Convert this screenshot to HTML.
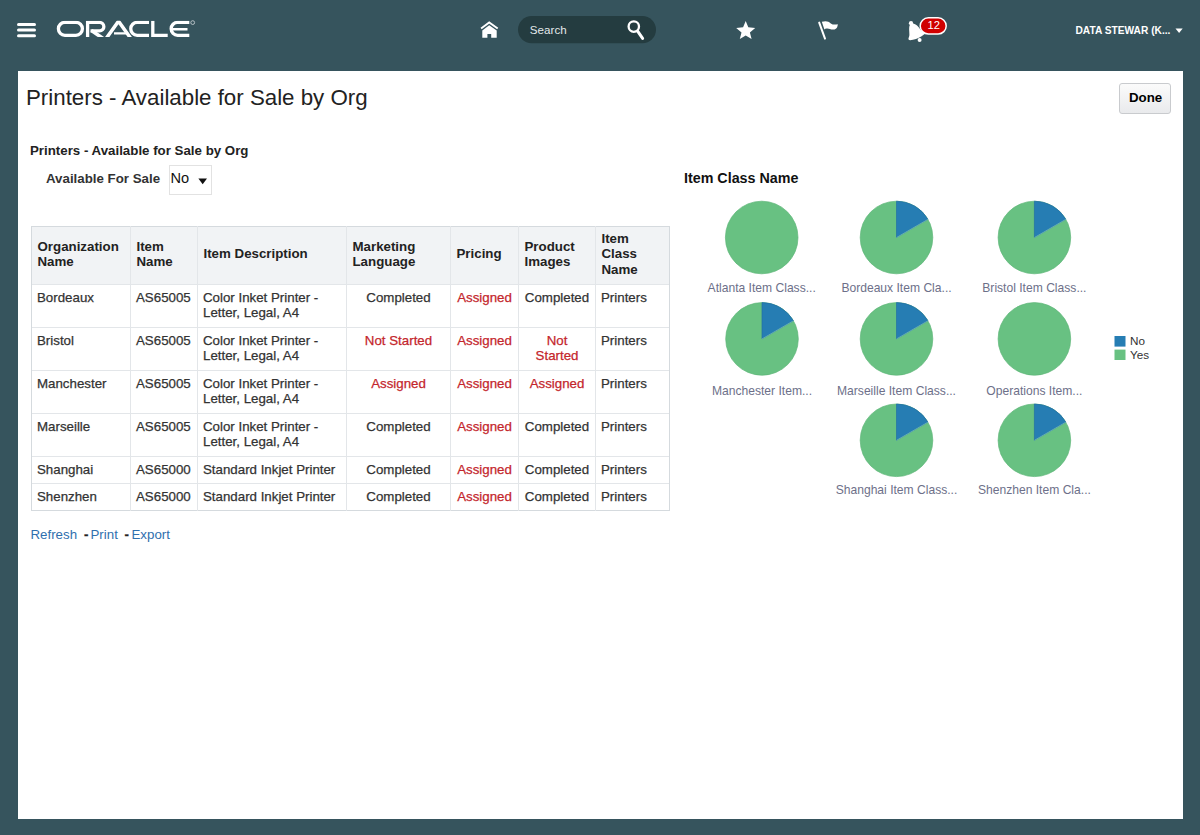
<!DOCTYPE html>
<html><head><meta charset="utf-8">
<style>
*{margin:0;padding:0;box-sizing:border-box}
html,body{width:1200px;height:835px;overflow:hidden;background:#36545d;font-family:"Liberation Sans",sans-serif}
.abs{position:absolute}
#panel{position:absolute;left:18px;top:71px;width:1165px;height:748px;background:#fff}
.t{position:absolute;white-space:nowrap;line-height:1}
.b{font-weight:bold}
.c{color:#333;font-size:13.3px;-webkit-text-stroke:0.25px currentColor}
.h{color:#222;font-size:13.3px;font-weight:bold}
.r{color:#c4262c}
.lab{color:#6d7089;font-size:12.1px}
.lnk{color:#2f6fae;font-size:13.3px}
</style></head><body>

<svg class="abs" style="left:0;top:0" width="1200" height="60">
 <g fill="#fff">
  <rect x="17" y="23" width="19" height="3" rx="1.5"/>
  <rect x="17" y="28.6" width="19" height="3" rx="1.5"/>
  <rect x="17" y="34.2" width="19" height="3" rx="1.5"/>
 </g>
 <defs><clipPath id="lc"><rect x="50" y="20.75" width="150" height="16.3"/></clipPath></defs>
 <g fill="none" stroke="#fff" stroke-width="3.3" clip-path="url(#lc)">
  <rect x="58.4" y="22.4" width="24" height="12.9" rx="6.45"/>
  <path d="M87.6 37 V22.4 H99.6 A4.25 4.25 0 0 1 99.6 30.9 H90.5"/>
  <path d="M91.5 30.5 L104.5 39.5" stroke-width="3.6"/>
  <path d="M105.8 39 L118.5 21.2 L131.2 39" stroke-width="3.5" stroke-linejoin="miter"/>
  <path d="M114 33.3 H127"  stroke-width="2.2"/>
  <path d="M149 22.4 H137.2 A6.45 6.45 0 0 0 137.2 35.3 H149"/>
  <path d="M152.8 20.8 V35.3 H167.7"/>
  <path d="M189.3 22.4 H177.6 A6.45 6.45 0 0 0 177.6 35.3 H189.3"/>
  <path d="M172.3 29.3 H187.5" stroke-width="2.6"/>
 </g>
 <circle cx="192.7" cy="22.6" r="1.9" fill="none" stroke="#cfd6d9" stroke-width="0.8"/>
 <!-- home -->
 <g fill="#fff">
  <path d="M482.3 30.4 L489.2 25.3 L496.7 30.4 V37.8 H491.2 V34 H487.4 V37.8 H482.3 Z"/>
 </g>
 <path d="M481.1 28.5 L489.2 22.5 L497.7 28.5" fill="none" stroke="#fff" stroke-width="1.9"/>
 <!-- search pill -->
 <rect x="518" y="16" width="138" height="27.3" rx="13.65" fill="#243c40"/>
 <circle cx="633.8" cy="26.6" r="5.2" fill="none" stroke="#fff" stroke-width="2.3"/>
 <path d="M637.6 31.2 L642.6 38.4" stroke="#fff" stroke-width="3" stroke-linecap="round"/>
 <!-- star -->
 <path d="M745.7 21 L748.3 27.3 L755.2 27.9 L749.9 32.4 L751.6 38.9 L745.7 35.4 L739.8 38.9 L741.5 32.4 L736.2 27.9 L743.1 27.3 Z" fill="#fff"/>
 <!-- flag -->
 <path d="M819.2 22.6 L825 38.6" stroke="#fff" stroke-width="2" stroke-linecap="round"/>
 <path d="M821.8 21.8 C826 20.5 828.5 21.3 830.8 23.4 C833 25 835.5 24.6 837.8 24.2 C837.6 27 836.5 29.4 833.6 29.6 C830.5 29.8 829 28.3 826.7 28.6 C825.6 28.7 824.9 29.1 824.4 29.4 Z" fill="#fff"/>
 <!-- bell -->
 <path d="M910 24.5 C908.5 27 909.4 31 909.4 35 C909.4 37 908 38 908.6 39.6 C909.2 40.6 911 40.2 913 39.8 C917 39 921 37 924 34.6 C925.2 33.6 925.2 32.6 924 32.2 C922 31.6 921 30.5 920 29 C918.5 26.5 916 24.5 913 23.6 Z" fill="#fff"/>
 <circle cx="911" cy="23.2" r="2.1" fill="#fff"/>
 <circle cx="919.6" cy="39.9" r="2" fill="#fff"/>
 <rect x="920.2" y="17.8" width="26" height="16.2" rx="8.1" fill="#d00000" stroke="#fff" stroke-width="1.5"/>
</svg>
<div class="t" style="left:529.7px;top:24.3px;font-size:11.6px;color:#e3e9eb;letter-spacing:0.05px">Search</div>
<div class="t" style="left:927.5px;top:19.8px;font-size:11.2px;color:#fff">12</div>
<div class="t b" style="left:1075.5px;top:25.5px;font-size:10.2px;color:#fff">DATA STEWAR (K...</div>
<svg class="abs" style="left:1174px;top:27px" width="10" height="7"><path d="M1.5 1.5 H8.7 L5.1 6 Z" fill="#fff"/></svg>
<div id="panel"></div>

<div class="t" style="left:26px;top:86.5px;font-size:22.3px;color:#222">Printers - Available for Sale by Org</div>
<div class="abs" style="left:1119px;top:83px;width:52px;height:30.5px;border:1px solid #c9cbce;border-radius:3px;background:linear-gradient(#fbfbfb,#e9eaec)"></div>
<div class="t b" style="left:1129px;top:90.8px;font-size:13.3px;color:#000">Done</div>
<div class="t h" style="left:30px;top:144px">Printers - Available for Sale by Org</div>
<div class="t h" style="left:46px;top:172px;color:#333">Available For Sale</div>
<div class="abs" style="left:169px;top:165px;width:42.5px;height:29.5px;border:1px solid #e2e2e2;background:#fff"></div>
<div class="t" style="left:170.5px;top:171px;font-size:14.6px;color:#111">No</div>
<svg class="abs" style="left:197px;top:177px" width="12" height="9"><path d="M1.4 1.4 H10 L5.7 7.2 Z" fill="#111"/></svg>
<div class="abs" style="left:31px;top:226px;width:639px;height:58px;background:#f1f3f5"></div>
<div class="abs" style="left:31px;top:226px;width:639px;height:1px;background:#d5dade"></div>
<div class="abs" style="left:31px;top:284px;width:639px;height:1px;background:#e3e6e9"></div>
<div class="abs" style="left:31px;top:327px;width:639px;height:1px;background:#e3e6e9"></div>
<div class="abs" style="left:31px;top:370px;width:639px;height:1px;background:#e3e6e9"></div>
<div class="abs" style="left:31px;top:413px;width:639px;height:1px;background:#e3e6e9"></div>
<div class="abs" style="left:31px;top:456px;width:639px;height:1px;background:#e3e6e9"></div>
<div class="abs" style="left:31px;top:483px;width:639px;height:1px;background:#e3e6e9"></div>
<div class="abs" style="left:31px;top:510px;width:639px;height:1px;background:#d5dade"></div>
<div class="abs" style="left:31px;top:226px;width:1px;height:285px;background:#d5dade"></div>
<div class="abs" style="left:130px;top:226px;width:1px;height:285px;background:#e3e6e9"></div>
<div class="abs" style="left:197px;top:226px;width:1px;height:285px;background:#e3e6e9"></div>
<div class="abs" style="left:346px;top:226px;width:1px;height:285px;background:#e3e6e9"></div>
<div class="abs" style="left:450px;top:226px;width:1px;height:285px;background:#e3e6e9"></div>
<div class="abs" style="left:518px;top:226px;width:1px;height:285px;background:#e3e6e9"></div>
<div class="abs" style="left:595px;top:226px;width:1px;height:285px;background:#e3e6e9"></div>
<div class="abs" style="left:669px;top:226px;width:1px;height:285px;background:#d5dade"></div>
<div class="abs h" style="left:37.5px;top:238.70px;line-height:15.5px;white-space:nowrap">Organization<br>Name</div>
<div class="abs h" style="left:136.5px;top:238.70px;line-height:15.5px;white-space:nowrap">Item<br>Name</div>
<div class="abs h" style="left:203.5px;top:246.45px;line-height:15.5px;white-space:nowrap">Item Description</div>
<div class="abs h" style="left:352.5px;top:238.70px;line-height:15.5px;white-space:nowrap">Marketing<br>Language</div>
<div class="abs h" style="left:456.5px;top:246.45px;line-height:15.5px;white-space:nowrap">Pricing</div>
<div class="abs h" style="left:524.5px;top:238.70px;line-height:15.5px;white-space:nowrap">Product<br>Images</div>
<div class="abs h" style="left:601.5px;top:230.95px;line-height:15.5px;white-space:nowrap">Item<br>Class<br>Name</div>
<div class="abs c" style="left:37px;top:289.5px;line-height:15.6px;white-space:nowrap">Bordeaux</div>
<div class="abs c" style="left:136px;top:289.5px;line-height:15.6px;white-space:nowrap">AS65005</div>
<div class="abs c" style="left:203px;top:289.5px;line-height:15.6px;white-space:nowrap">Color Inket Printer -<br>Letter, Legal, A4</div>
<div class="abs c" style="left:347px;top:289.5px;width:103px;text-align:center;line-height:15.6px">Completed</div>
<div class="abs c r" style="left:451px;top:289.5px;width:67px;text-align:center;line-height:15.6px">Assigned</div>
<div class="abs c" style="left:519px;top:289.5px;width:76px;text-align:center;line-height:15.6px">Completed</div>
<div class="abs c" style="left:601px;top:289.5px;line-height:15.6px;white-space:nowrap">Printers</div>
<div class="abs c" style="left:37px;top:332.5px;line-height:15.6px;white-space:nowrap">Bristol</div>
<div class="abs c" style="left:136px;top:332.5px;line-height:15.6px;white-space:nowrap">AS65005</div>
<div class="abs c" style="left:203px;top:332.5px;line-height:15.6px;white-space:nowrap">Color Inket Printer -<br>Letter, Legal, A4</div>
<div class="abs c r" style="left:347px;top:332.5px;width:103px;text-align:center;line-height:15.6px">Not Started</div>
<div class="abs c r" style="left:451px;top:332.5px;width:67px;text-align:center;line-height:15.6px">Assigned</div>
<div class="abs c r" style="left:519px;top:332.5px;width:76px;text-align:center;line-height:15.6px">Not<br>Started</div>
<div class="abs c" style="left:601px;top:332.5px;line-height:15.6px;white-space:nowrap">Printers</div>
<div class="abs c" style="left:37px;top:375.5px;line-height:15.6px;white-space:nowrap">Manchester</div>
<div class="abs c" style="left:136px;top:375.5px;line-height:15.6px;white-space:nowrap">AS65005</div>
<div class="abs c" style="left:203px;top:375.5px;line-height:15.6px;white-space:nowrap">Color Inket Printer -<br>Letter, Legal, A4</div>
<div class="abs c r" style="left:347px;top:375.5px;width:103px;text-align:center;line-height:15.6px">Assigned</div>
<div class="abs c r" style="left:451px;top:375.5px;width:67px;text-align:center;line-height:15.6px">Assigned</div>
<div class="abs c r" style="left:519px;top:375.5px;width:76px;text-align:center;line-height:15.6px">Assigned</div>
<div class="abs c" style="left:601px;top:375.5px;line-height:15.6px;white-space:nowrap">Printers</div>
<div class="abs c" style="left:37px;top:418.5px;line-height:15.6px;white-space:nowrap">Marseille</div>
<div class="abs c" style="left:136px;top:418.5px;line-height:15.6px;white-space:nowrap">AS65005</div>
<div class="abs c" style="left:203px;top:418.5px;line-height:15.6px;white-space:nowrap">Color Inket Printer -<br>Letter, Legal, A4</div>
<div class="abs c" style="left:347px;top:418.5px;width:103px;text-align:center;line-height:15.6px">Completed</div>
<div class="abs c r" style="left:451px;top:418.5px;width:67px;text-align:center;line-height:15.6px">Assigned</div>
<div class="abs c" style="left:519px;top:418.5px;width:76px;text-align:center;line-height:15.6px">Completed</div>
<div class="abs c" style="left:601px;top:418.5px;line-height:15.6px;white-space:nowrap">Printers</div>
<div class="abs c" style="left:37px;top:461.5px;line-height:15.6px;white-space:nowrap">Shanghai</div>
<div class="abs c" style="left:136px;top:461.5px;line-height:15.6px;white-space:nowrap">AS65000</div>
<div class="abs c" style="left:203px;top:461.5px;line-height:15.6px;white-space:nowrap">Standard Inkjet Printer</div>
<div class="abs c" style="left:347px;top:461.5px;width:103px;text-align:center;line-height:15.6px">Completed</div>
<div class="abs c r" style="left:451px;top:461.5px;width:67px;text-align:center;line-height:15.6px">Assigned</div>
<div class="abs c" style="left:519px;top:461.5px;width:76px;text-align:center;line-height:15.6px">Completed</div>
<div class="abs c" style="left:601px;top:461.5px;line-height:15.6px;white-space:nowrap">Printers</div>
<div class="abs c" style="left:37px;top:488.5px;line-height:15.6px;white-space:nowrap">Shenzhen</div>
<div class="abs c" style="left:136px;top:488.5px;line-height:15.6px;white-space:nowrap">AS65000</div>
<div class="abs c" style="left:203px;top:488.5px;line-height:15.6px;white-space:nowrap">Standard Inkjet Printer</div>
<div class="abs c" style="left:347px;top:488.5px;width:103px;text-align:center;line-height:15.6px">Completed</div>
<div class="abs c r" style="left:451px;top:488.5px;width:67px;text-align:center;line-height:15.6px">Assigned</div>
<div class="abs c" style="left:519px;top:488.5px;width:76px;text-align:center;line-height:15.6px">Completed</div>
<div class="abs c" style="left:601px;top:488.5px;line-height:15.6px;white-space:nowrap">Printers</div>
<div class="t lnk" style="left:30.5px;top:528px">Refresh</div>
<div class="t c b" style="left:84px;top:528px;color:#222">-</div>
<div class="t lnk" style="left:90.5px;top:528px">Print</div>
<div class="t c b" style="left:124.5px;top:528px;color:#222">-</div>
<div class="t lnk" style="left:131.5px;top:528px">Export</div>
<div class="t b" style="left:684px;top:171px;font-size:14.3px;color:#111">Item Class Name</div>
<svg class="abs" style="left:0;top:0" width="1200" height="835"><circle cx="761.7" cy="237.5" r="36.3" fill="#68c182" stroke="#5fb679" stroke-width="0.7"/><circle cx="896.5" cy="237.5" r="36.3" fill="#68c182" stroke="#5fb679" stroke-width="0.7"/><path d="M896.5 237.5 V201.20 A36.3 36.3 0 0 1 927.94 219.35 Z" fill="#267db3" stroke="#2270a5" stroke-width="0.7"/><path d="M896.5 237.5 L927.94 219.35" stroke="#8fd0c0" stroke-width="0.8" opacity="0.7"/><circle cx="1034.4" cy="237.5" r="36.3" fill="#68c182" stroke="#5fb679" stroke-width="0.7"/><path d="M1034.4 237.5 V201.20 A36.3 36.3 0 0 1 1065.84 219.35 Z" fill="#267db3" stroke="#2270a5" stroke-width="0.7"/><path d="M1034.4 237.5 L1065.84 219.35" stroke="#8fd0c0" stroke-width="0.8" opacity="0.7"/><circle cx="762" cy="338.9" r="36.3" fill="#68c182" stroke="#5fb679" stroke-width="0.7"/><path d="M762 338.9 V302.60 A36.3 36.3 0 0 1 793.44 320.75 Z" fill="#267db3" stroke="#2270a5" stroke-width="0.7"/><path d="M762 338.9 L793.44 320.75" stroke="#8fd0c0" stroke-width="0.8" opacity="0.7"/><circle cx="896.5" cy="338.9" r="36.3" fill="#68c182" stroke="#5fb679" stroke-width="0.7"/><path d="M896.5 338.9 V302.60 A36.3 36.3 0 0 1 927.94 320.75 Z" fill="#267db3" stroke="#2270a5" stroke-width="0.7"/><path d="M896.5 338.9 L927.94 320.75" stroke="#8fd0c0" stroke-width="0.8" opacity="0.7"/><circle cx="1034.4" cy="338.9" r="36.3" fill="#68c182" stroke="#5fb679" stroke-width="0.7"/><circle cx="896.5" cy="440.3" r="36.3" fill="#68c182" stroke="#5fb679" stroke-width="0.7"/><path d="M896.5 440.3 V404.00 A36.3 36.3 0 0 1 927.94 422.15 Z" fill="#267db3" stroke="#2270a5" stroke-width="0.7"/><path d="M896.5 440.3 L927.94 422.15" stroke="#8fd0c0" stroke-width="0.8" opacity="0.7"/><circle cx="1034.4" cy="440.3" r="36.3" fill="#68c182" stroke="#5fb679" stroke-width="0.7"/><path d="M1034.4 440.3 V404.00 A36.3 36.3 0 0 1 1065.84 422.15 Z" fill="#267db3" stroke="#2270a5" stroke-width="0.7"/><path d="M1034.4 440.3 L1065.84 422.15" stroke="#8fd0c0" stroke-width="0.8" opacity="0.7"/><rect x="1114.5" y="336" width="11" height="10.6" fill="#267db3"/><rect x="1114.5" y="349.6" width="11" height="10.4" fill="#68c182"/></svg>
<div class="t lab" style="left:681.7px;width:160px;text-align:center;top:282px">Atlanta Item Class...</div>
<div class="t lab" style="left:816.5px;width:160px;text-align:center;top:282px">Bordeaux Item Cla...</div>
<div class="t lab" style="left:954.4000000000001px;width:160px;text-align:center;top:282px">Bristol Item Class...</div>
<div class="t lab" style="left:682px;width:160px;text-align:center;top:384.5px">Manchester Item...</div>
<div class="t lab" style="left:816.5px;width:160px;text-align:center;top:384.5px">Marseille Item Class...</div>
<div class="t lab" style="left:954.4000000000001px;width:160px;text-align:center;top:384.5px">Operations Item...</div>
<div class="t lab" style="left:816.5px;width:160px;text-align:center;top:484px">Shanghai Item Class...</div>
<div class="t lab" style="left:954.4000000000001px;width:160px;text-align:center;top:484px">Shenzhen Item Cla...</div>
<div class="t" style="left:1130px;top:335px;font-size:11.7px;color:#333">No</div>
<div class="t" style="left:1130px;top:348.5px;font-size:11.7px;color:#333">Yes</div>
</body></html>
